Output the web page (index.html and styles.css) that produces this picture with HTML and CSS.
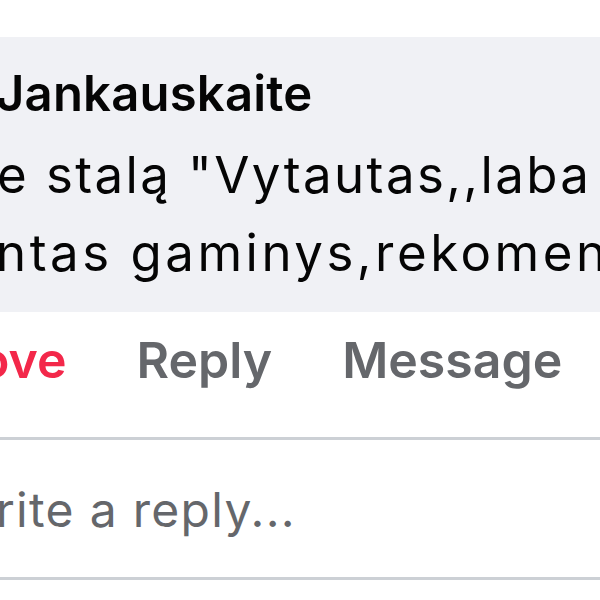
FILE: index.html
```html
<!DOCTYPE html>
<html lang="lt">

<head>
  <meta charset="UTF-8">
  <meta name="viewport" content="width=device-width, initial-scale=1.0">
  <title>Comment</title>
  <link rel="stylesheet" href="styles.css">
</head>

<body>
  <div class="comment">
    <div class="bubble">
      <div class="author">Jankauskaite</div>
      <div class="comment-text">
        <div class="line line-first">e stalą "Vytautas,,laba</div>
        <div class="line line-second">ntas gaminys,rekomenduoju</div>
      </div>
    </div>

    <!-- Actions under the comment -->
    <div class="actions">
      <span class="action action-love">ove</span>
      <span class="action">Reply</span>
      <span class="action">Message</span>
    </div>

    <div class="reply-box">
      <span class="reply-placeholder">rite a reply...</span>
    </div>
  </div>
</body>

</html>
```

FILE: styles.css
```css
body {
  margin: 0;
  width: 600px;
  height: 600px;
  overflow: hidden;
  background-color: #fff;
  font-family: "Inter", "Roboto", sans-serif;
  color: #050505;
}

.comment {
  padding-top: 37px;
}

.bubble {
  background-color: #f0f1f5;
  height: 275px;
  box-sizing: border-box;
  padding-top: 27px;
  white-space: nowrap;
  overflow: hidden;
}

.author {
  font-size: 49px;
  font-weight: 600;
  line-height: 60px;
  letter-spacing: 0.2px;
  margin-left: -4px;
}

.comment-text {
  font-size: 51px;
  line-height: 78px;
  letter-spacing: 2.4px;
  margin-top: 12px;
}

.line-first {
  margin-left: -3px;
}

.line-second {
  margin-left: -4px;
  letter-spacing: 3.5px;
}

.actions {
  display: flex;
  gap: 70px;
  height: 128px;
  box-sizing: border-box;
  padding-top: 18px;
  margin-left: -21px;
  font-size: 50px;
  font-weight: 600;
  color: #65676b;
  border-bottom: 3px solid #ccd0d5;
}

.action-love {
  color: #f3284a;
}

.reply-box {
  height: 140px;
  box-sizing: border-box;
  padding-top: 40px;
  font-size: 48px;
  letter-spacing: 1.3px;
  color: #65676b;
  margin-left: -4px;
  border-bottom: 3px solid #ccd0d5;
}
```
